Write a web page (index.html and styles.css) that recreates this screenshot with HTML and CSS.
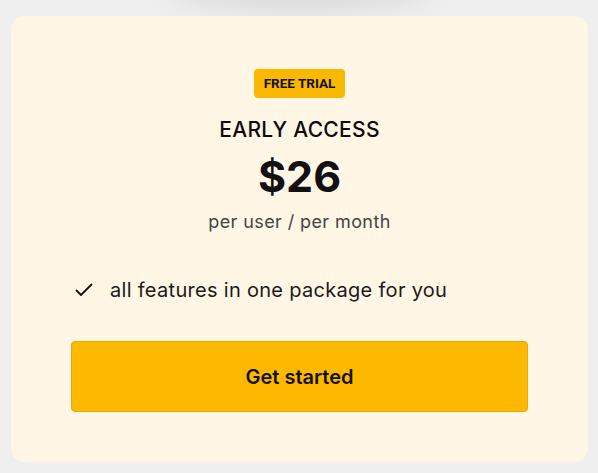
FILE: index.html
```html
<!DOCTYPE html>
<html>
<head>
<meta charset="utf-8">
<link rel="stylesheet" href="styles.css">
</head>
<body>
<div class="page">
  <div class="glow"></div>
  <div class="card">
    <div class="badge">FREE TRIAL</div>
    <h2 class="title">EARLY ACCESS</h2>
    <div class="price">$26</div>
    <div class="period">per user / per month</div>
    <ul class="features">
      <li class="feature">
        <svg class="check" width="18" height="14" viewBox="0 0 18 14"><path d="M1.5 7.5 L6 12 L16.5 1.5" fill="none" stroke="#111" stroke-width="1.8" stroke-linecap="round" stroke-linejoin="round"/></svg>
        <span>all features in one package for you</span>
      </li>
    </ul>
    <button class="cta">Get started</button>
  </div>
</div>
</body>
</html>
```
FILE: styles.css
```css
html, body {
  margin: 0;
  padding: 0;
}
body {
  background: #efefef;
  font-family: Inter, "Noto Sans", sans-serif;
  color: #111;
}
.page {
  position: relative;
  width: 598px;
  height: 473px;
  padding: 16px 10px 11px 11px;
  box-sizing: border-box;
  overflow: hidden;
}
.glow {
  position: absolute;
  left: 170px;
  top: -40px;
  width: 260px;
  height: 50px;
  border-radius: 50%;
  background: #d9d9d9;
  filter: blur(14px);
}
.card {
  position: relative;
  height: 100%;
  background: #fff6e5;
  border-radius: 14px;
  display: flex;
  flex-direction: column;
  align-items: center;
  padding: 53px 60px 0 60px;
  box-sizing: border-box;
}
.badge {
  background: #fbb800;
  border-radius: 4px;
  font-family: Roboto, Inter, sans-serif;
  font-weight: 700;
  font-size: 13.5px;
  padding: 0 10px;
  height: 29px;
  line-height: 29px;
  color: #111;
}
.title {
  margin: 19px 0 0 0;
  font-size: 21px;
  font-weight: 500;
  line-height: 26px;
  letter-spacing: 0.3px;
  color: #0c0c0c;
}
.price {
  margin-top: 9px;
  font-size: 43px;
  font-weight: 700;
  line-height: 48px;
}
.period {
  margin-top: 9px;
  font-size: 18px;
  font-weight: 400;
  color: #444;
  line-height: 26px;
  letter-spacing: 0.4px;
}
.features {
  list-style: none;
  margin: 42px 0 0 0;
  padding: 0 0 0 4px;
  align-self: stretch;
}
.feature {
  display: flex;
  align-items: center;
  gap: 17px;
  font-size: 20px;
  line-height: 26px;
  color: #1a1a1a;
  letter-spacing: 0.3px;
}
.cta {
  margin-top: 38px;
  align-self: stretch;
  height: 71px;
  background: #fdb900;
  border: 1px solid #e8a900;
  border-radius: 4px;
  font-family: Inter, sans-serif;
  font-size: 20px;
  font-weight: 600;
  color: #111;
}
```
